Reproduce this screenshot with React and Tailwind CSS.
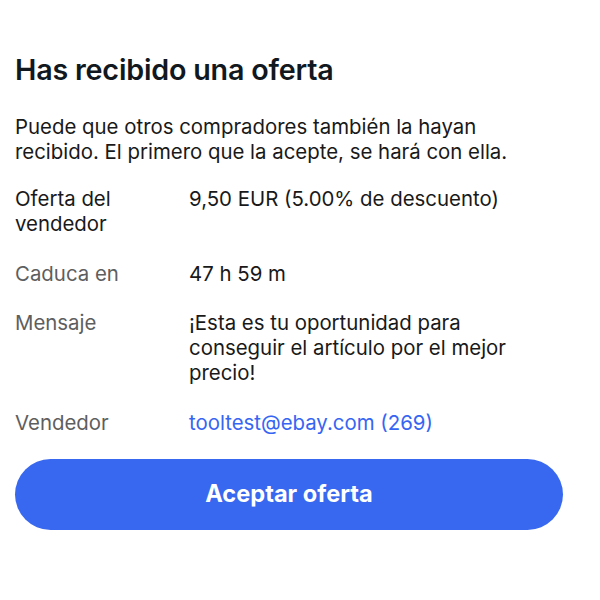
import React from 'react'

const rows = [
    { label: 'Oferta del vendedor', value: '9,50 EUR (5.00% de descuento)', dark: true },
    { label: 'Caduca en', value: '47 h 59 m' },
    { label: 'Mensaje', value: '¡Esta es tu oportunidad para conseguir el artículo por el mejor precio!' },
    { label: 'Vendedor', value: 'tooltest@ebay.com (269)', link: true },
]

const App = () => {
    return (
        <div className="w-[600px] h-[600px] bg-white font-['Inter',sans-serif] text-[#191919]">
            <div className="px-[15px] pt-[52px]">
                <h1 className="text-[28.7px] leading-[36px] font-semibold text-[#111820] tracking-[-0.2px]">Has recibido una oferta</h1>

                <p className="mt-[26px] text-[20.4px] leading-[25px] w-[500px]">
                    Puede que otros compradores también la hayan recibido. El primero que la acepte, se hará con ella.
                </p>

                <div className="mt-[22px] flex flex-col gap-[24.5px]">
                    {rows.map((row) => (
                        <div key={row.label} className="flex text-[20.4px] leading-[25px]">
                            <div className={'w-[174px] shrink-0 pr-4 ' + (row.dark ? 'text-[#191919]' : 'text-[#5e5e5e]')}>
                                {row.label === 'Oferta del vendedor' ? <>Oferta del<br />vendedor</> : row.label}
                            </div>
                            <div className={'w-[340px] ' + (row.link ? 'text-[#3665f3]' : 'text-[#191919]')}>
                                {row.value}
                            </div>
                        </div>
                    ))}
                </div>

                <button type="button" className="mt-[24px] w-[548px] h-[71px] rounded-full bg-[#3868ef] text-white text-[23.6px] font-bold">
                    Aceptar oferta
                </button>
            </div>
        </div>
    )
}

export default App
